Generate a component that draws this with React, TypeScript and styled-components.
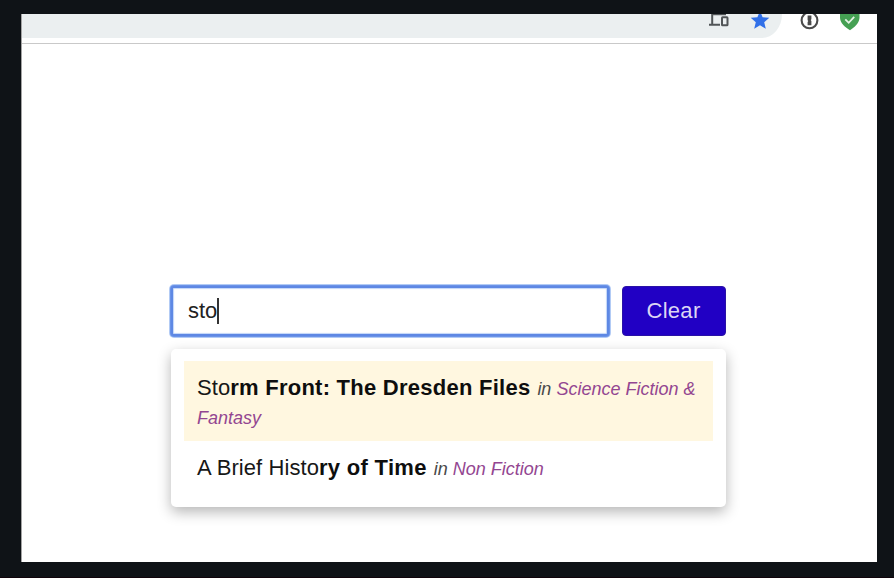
import React from "react";
import styled, { createGlobalStyle } from "styled-components";

const GlobalStyle = createGlobalStyle`
  *, *::before, *::after { box-sizing: border-box; }
  body { margin: 0; background: #0f1317; font-family: "Liberation Sans", Arial, sans-serif; }
`;

const Backdrop = styled.div`
  width: 100%;
  height: 578px;
  padding: 14px 17px 16px 21px;
  background: #0f1317;
  border-bottom: 1px solid #10040b;
`;

const BrowserWindow = styled.main`
  height: 548px;
  background: #fff;
  border-left: 1px solid #a3a3a3;
  overflow: hidden;
`;

const Toolbar = styled.header`
  height: 30px;
  display: flex;
  border-bottom: 1px solid #c9c9c9;
`;

const AddressBar = styled.div`
  width: 760px;
  height: 24px;
  display: flex;
  justify-content: flex-end;
  gap: 20px;
  padding-right: 12px;
  background: #ebeff0;
  border-bottom-right-radius: 20px 24px;
`;

const Extensions = styled.div`
  display: flex;
  gap: 19px;
  padding-left: 18px;
`;

const Icon = styled.svg`
  display: block;
  flex: none;
`;

const Search = styled.section`
  width: 555px;
  margin: 242px 0 0 149px;
`;

const Controls = styled.div`
  display: flex;
  gap: 13px;
`;

const Field = styled.div`
  width: 438px;
  height: 50px;
  display: flex;
  align-items: center;
  padding: 0 0 0 15px;
  background: #fff;
  border: 2px solid #5e88e4;
  border-radius: 3px;
  box-shadow: 0 0 0 1px #6b93e8, 0 0 0 2px #b2cbf5, inset 0 0 1px 1px #c1d5f8;
`;

const Query = styled.span`
  font-size: 22px;
  line-height: 26px;
  color: #222;
`;

const Caret = styled.span`
  width: 1.5px;
  height: 26px;
  background: #333;
`;

const ClearButton = styled.button`
  width: 104px;
  height: 50px;
  padding: 0 1px 0 0;
  border: 1px solid #2a12a6;
  border-radius: 4px;
  background: #2100c4;
  color: #dcd6f4;
  font: 22px/26px "Liberation Sans", Arial, sans-serif;
  letter-spacing: 0.3px;
`;

const Results = styled.ul`
  height: 158px;
  list-style: none;
  margin: 13px 0 0;
  padding: 12px 13px;
  background: #fff;
  border-radius: 5px;
  box-shadow: 0 5px 14px rgba(0, 0, 0, 0.29);
`;

const Result = styled.li<{ $active?: boolean }>`
  padding: 13px 13px 10px;
  background: ${({ $active }) => ($active ? "#fff7e0" : "transparent")};
  font-size: 22px;
  line-height: 28.5px;
  color: #171717;
`;

const Match = styled.span`
  letter-spacing: 0.07px;
`;

const Rest = styled.strong<{ $spacing: number }>`
  letter-spacing: ${({ $spacing }) => $spacing}px;
  color: #0e0e0e;
`;

const Meta = styled.em`
  margin-left: 7px;
  font-size: 18px;
  line-height: 1;
  color: #494949;
`;

const Category = styled.span`
  color: #934691;
`;

export default function App() {
  return (
    <>
      <GlobalStyle />
      <Backdrop>
        <BrowserWindow>
          <Toolbar>
            <AddressBar>
              <Icon width="21" height="24" viewBox="0 0 21 24" fill="none" stroke="#515557" strokeWidth="2">
                <path d="M3.2 0V10M0 10.8H11M2.5 .2H17" />
                <rect x="13" y="3.3" width="5.5" height="8" rx=".6" />
              </Icon>
              <Icon width="20" height="24" viewBox="0 0 20 24">
                <path d="M10-3 12.6 3.2 19.3 3.8 14.2 8.2 15.8 14.8 10 11.3 4.2 14.8 5.8 8.2.7 3.8 7.4 3.2Z" fill="#3170e8" />
              </Icon>
            </AddressBar>
            <Extensions>
              <Icon width="20" height="24" viewBox="0 0 20 24">
                <circle cx="9.5" cy="6.3" r="7.9" fill="#fff" stroke="#4b4b4b" strokeWidth="2.1" />
                <path d="M7.6 1.5h3.8v3.7l-.7.9.7.8V11.2H7.6V7.9l.7-.9-.7-.8Z" fill="#4b4b4b" />
              </Icon>
              <Icon width="22" height="24" viewBox="0 0 22 24">
                <path d="M1-1H20.5V4C20 9.5 15.5 13.2 11 16.3 6 13.2 1.5 9.5 1 4Z" fill="#45a053" />
                <path d="m6.3 5.3 3.4 3.5 5.5-6" fill="none" stroke="#e4f3e5" strokeWidth="1.8" />
              </Icon>
            </Extensions>
          </Toolbar>
          <Search>
            <Controls>
              <Field role="textbox" aria-label="Search books">
                <Query>sto</Query>
                <Caret />
              </Field>
              <ClearButton>Clear</ClearButton>
            </Controls>
            <Results>
              <Result $active>
                <Match>Sto</Match>
                <Rest $spacing={0.25}>rm Front: The Dresden Files</Rest>
                <Meta>in <Category>Science Fiction &amp; Fantasy</Category></Meta>
              </Result>
              <Result>
                <Match>A Brief Histo</Match>
                <Rest $spacing={0.3}>ry of Time</Rest>
                <Meta>in <Category>Non Fiction</Category></Meta>
              </Result>
            </Results>
          </Search>
        </BrowserWindow>
      </Backdrop>
    </>
  );
}
